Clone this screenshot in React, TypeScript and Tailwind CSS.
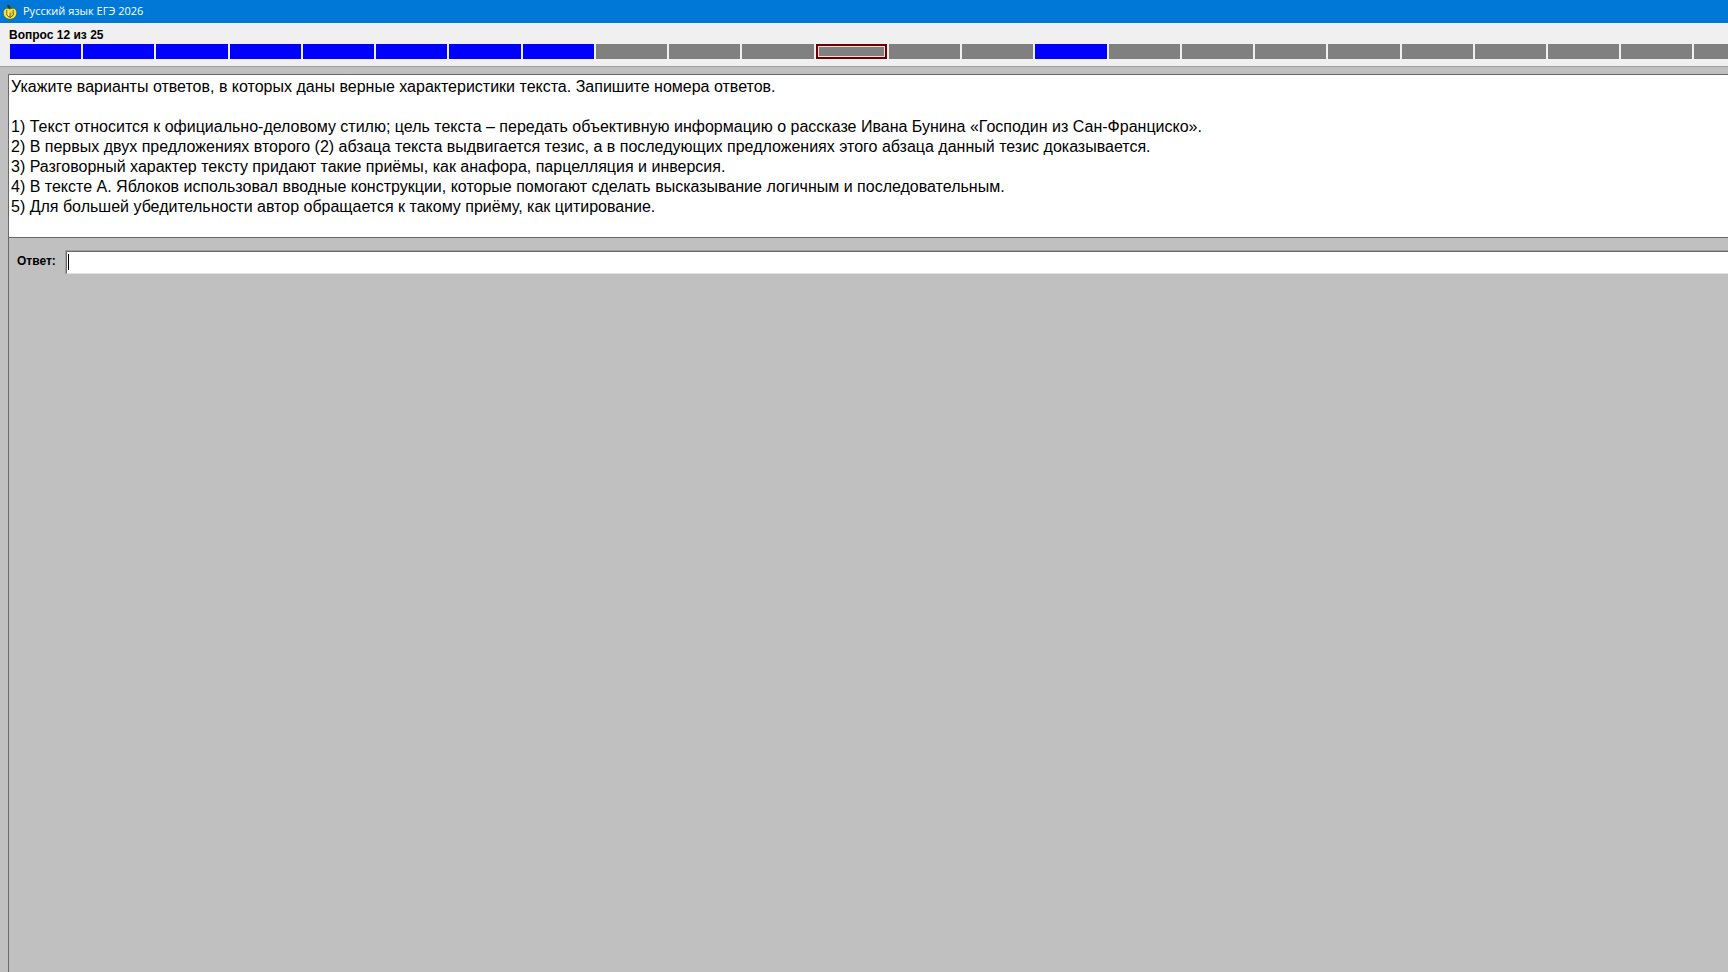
import clsx from "clsx";

const TOTAL = 25;
const CURRENT = 12;
const ANSWERED = [1, 2, 3, 4, 5, 6, 7, 8, 15];

const options = [
  "1) Текст относится к официально-деловому стилю; цель текста – передать объективную информацию о рассказе Ивана Бунина «Господин из Сан-Франциско».",
  "2) В первых двух предложениях второго (2) абзаца текста выдвигается тезис, а в последующих предложениях этого абзаца данный тезис доказывается.",
  "3) Разговорный характер тексту придают такие приёмы, как анафора, парцелляция и инверсия.",
  "4) В тексте А. Яблоков использовал вводные конструкции, которые помогают сделать высказывание логичным и последовательным.",
  "5) Для большей убедительности автор обращается к такому приёму, как цитирование.",
];

const AppIcon = () => (
  <svg width="16" height="16" viewBox="0 0 16 16" aria-hidden="true">
    <path
      d="M8 5C4.4 3 1.2 5 1.2 8.8C1.2 12.4 4 15.3 8 15.3S14.8 12.4 14.8 8.8C14.8 5 11.6 3 8 5Z"
      fill="#f4e052"
      stroke="#3c5a3a"
      strokeWidth="0.8"
    />
    <path d="M4.8 6L8 8.2V13.6L4.8 11.4Z" fill="#fdf58a" />
    <path d="M11.2 6L8 8.2V13.6L11.2 11.4Z" fill="#efd02c" />
    <path
      d="M4.8 6V11.2L8 13.6L11.2 11.2V6M8 8.6V13.4"
      fill="none"
      stroke="#6d6a12"
      strokeWidth="1"
    />
    <path d="M8.2 4.8C5.8 4.4 4.8 2.6 5.4 0.8C7.6 0.8 9 2.6 8.2 4.8Z" fill="#17452f" />
    <path d="M8.4 4.6C8.8 3 10 2.2 11.6 2.6C11.2 4.2 10 5 8.4 4.6Z" fill="#2f7a3a" />
  </svg>
);

const Segment = ({ number }: { number: number }) => {
  const current = number === CURRENT;
  return (
    <button
      type="button"
      aria-label={`Вопрос ${number}`}
      aria-current={current ? "step" : undefined}
      className={clsx(
        "h-[15px]",
        ANSWERED.includes(number) ? "bg-[#0000ff]" : "bg-[#808080]",
        current && "border-2 border-[#6b0000]"
      )}
    >
      {current && <span className="block h-full w-full border border-[#f6dcdc]" />}
    </button>
  );
};

const App = () => {
  return (
    <div className="min-h-screen w-full overflow-hidden bg-[#c0c0c0] font-['Liberation_Sans',sans-serif] text-black">
      {/* the window is wider than the screen and runs off its right edge */}
      <div className="flex min-h-screen w-[107%] flex-col">
        <header className="flex h-[23px] items-center gap-[5px] bg-[#0078d7] pl-[2px]">
          <AppIcon />
          <h1 className="font-['Open_Sans',sans-serif] text-[11px] text-white">
            Русский язык ЕГЭ 2026
          </h1>
        </header>

        <nav className="border-b border-[#a0a0a0] bg-[#f0f0f0] px-[10px] pt-[4px] pb-[7px]">
          <p className="-ml-px h-[17px] text-xs leading-[16px] font-bold">
            Вопрос {CURRENT} из {TOTAL}
          </p>
          <div className="grid grid-cols-[repeat(25,minmax(0,1fr))] gap-[2px]">
            {Array.from({ length: TOTAL }, (_, i) => (
              <Segment key={i} number={i + 1} />
            ))}
          </div>
        </nav>

        <main className="mt-[7px] ml-[8px] flex-1 border-t border-l border-[#696969]">
          <section className="border-b border-[#696969] bg-white px-[2px] pt-[2px] pb-[20px] text-base leading-[20px]">
            <p className="mb-[20px]">
              Укажите варианты ответов, в которых даны верные характеристики текста. Запишите номера
              ответов.
            </p>
            {options.map((option) => (
              <p key={option}>{option}</p>
            ))}
          </section>

          <form className="flex items-center pt-[12px] pl-[8px]" onSubmit={(e) => e.preventDefault()}>
            <label htmlFor="answer" className="w-[48px] pb-[2px] text-xs leading-[16px] font-bold">
              Ответ:
            </label>
            <div className="relative flex-1 border-t border-l border-[#a0a0a0]">
              <input
                id="answer"
                type="text"
                autoComplete="off"
                className="block h-[23px] w-full border border-t-[#696969] border-r-[#e3e3e3] border-b-[#e3e3e3] border-l-[#696969] bg-white px-[2px] text-base outline-none"
              />
              <span className="absolute top-[3px] left-[2px] h-[16px] w-px bg-black" />
            </div>
          </form>
        </main>
      </div>
    </div>
  );
};

export default App;
